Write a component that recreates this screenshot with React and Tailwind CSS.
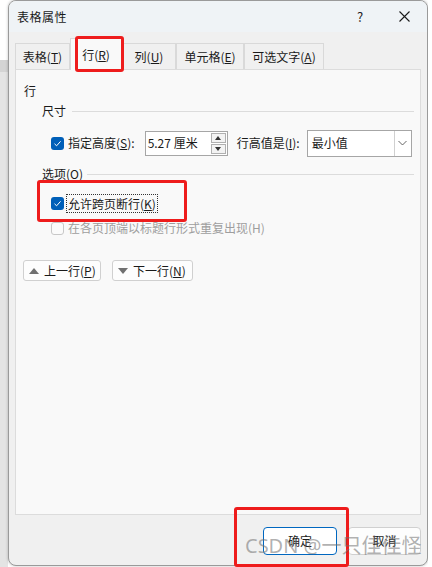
import React from "react";

const font = { fontFamily: '"Noto Sans CJK SC", "Microsoft YaHei", "Noto Sans", sans-serif' };

function Check({ checked = true, disabled = false }) {
  if (disabled) {
    return <div className="w-[13px] h-[13px] rounded-[3px] border border-[#c8c8c8] bg-[#fbfbfb] shrink-0" />;
  }
  return (
    <div className="w-[13px] h-[13px] rounded-[3px] bg-[#005fb8] flex items-center justify-center shrink-0">
      {checked && (
        <svg width="9" height="9" viewBox="0 0 9 9">
          <path d="M1.5 4.8 L3.6 6.8 L7.6 2.3" fill="none" stroke="#fff" strokeWidth="1" />
        </svg>
      )}
    </div>
  );
}

function Tab({ children, selected, w }) {
  if (selected) {
    return (
      <div className={`h-[32px] ${w} -mb-px bg-[#f9f9f9] border border-[#d9d9d9] border-b-0 flex items-center justify-center text-[12px] text-[#1a1a1a] relative z-10`}>
        {children}
      </div>
    );
  }
  return (
    <div className={`h-[26px] ${w} bg-[#f0f0f0] border border-[#d9d9d9] border-b-0 flex items-center justify-center text-[12px] text-[#1a1a1a]`}>
      {children}
    </div>
  );
}

export default function App() {
  return (
    <div className="w-[432px] h-[567px] relative bg-white overflow-hidden" style={font}>
      <div className="flex h-full">
        {/* background strip */}
        <div className="w-[8px] flex flex-col">
          <div className="h-[60px] bg-white" />
          <div className="h-[12px] bg-[#d4d4d4]" />
          <div className="flex-1 bg-[#e4e4e4]" />
        </div>
        {/* dialog */}
        <div className="w-[420px] h-[566px] border border-[#9a9a9a] rounded-[8px] overflow-hidden flex flex-col bg-[#f0f0f0] shadow-[0_0_3px_rgba(0,0,0,0.25)]">
          {/* title bar */}
          <div className="h-[31px] bg-[#eff3f6] flex items-center shrink-0">
            <div className="pl-[8px] text-[12px] text-[#1a1a1a] flex-1 tracking-[0.5px]">表格属性</div>
            <div className="w-[24px] text-center text-[13px] text-[#222] mr-[22px]">?</div>
            <div className="w-[20px] mr-[13px] flex items-center justify-center">
              <svg width="11" height="11" viewBox="0 0 11 11">
                <path d="M0.5 0.5 L10.5 10.5 M10.5 0.5 L0.5 10.5" stroke="#1a1a1a" strokeWidth="1.1" />
              </svg>
            </div>
          </div>
          {/* tabs */}
          <div className="px-[6px] flex items-end h-[37px] shrink-0">
            <Tab w="w-[55px]">表格(<u>T</u>)</Tab>
            <Tab selected w="w-[52px]">行(<u>R</u>)</Tab>
            <Tab w="w-[54px]">列(<u>U</u>)</Tab>
            <Tab w="w-[68px]">单元格(<u>E</u>)</Tab>
            <Tab w="w-[80px]">可选文字(<u>A</u>)</Tab>
          </div>
          {/* panel */}
          <div className="mx-[6px] h-[446px] bg-[#f9f9f9] border border-[#dcdcdc] shrink-0 flex flex-col text-[12px] text-[#1a1a1a]">
            <div className="mt-[13px] h-[16px] pl-[8px] flex items-center">行</div>
            <div className="mt-[4px] h-[16px] pl-[26px] pr-[6px] flex items-center gap-[6px]">
              <span>尺寸</span>
              <div className="flex-1 h-px bg-[#dcdcdc]" />
            </div>
            <div className="mt-[11px] h-[26px] pl-[35px] flex items-center">
              <Check />
              <span className="ml-[4px]">指定高度(<u>S</u>):</span>
              <div className="ml-[10px] w-[83px] h-[25px] bg-white border border-[#a6a6a6] flex items-center pl-[2px] pr-[1px]">
                <span className="flex-1">5.27 厘米</span>
                <div className="w-[15px] h-[21px] flex flex-col gap-[1px]">
                  <div className="flex-1 border border-[#b0b0b0] bg-[#f3f3f3] flex items-center justify-center">
                    <svg width="6" height="4" viewBox="0 0 6 4"><path d="M0 4 L3 0 L6 4 Z" fill="#333" /></svg>
                  </div>
                  <div className="flex-1 border border-[#b0b0b0] bg-[#f3f3f3] flex items-center justify-center">
                    <svg width="6" height="4" viewBox="0 0 6 4"><path d="M0 0 L3 4 L6 0 Z" fill="#333" /></svg>
                  </div>
                </div>
              </div>
              <span className="ml-[9px]">行高值是(<u>I</u>):</span>
              <div className="ml-[7px] w-[105px] h-[27px] bg-white border border-[#a6a6a6] flex items-center">
                <span className="flex-1 pl-[4px]">最小值</span>
                <div className="w-[17px] h-full border-l border-[#d0d0d0] flex items-center justify-center">
                  <svg width="9" height="6" viewBox="0 0 9 6"><path d="M0.5 1 L4.5 5 L8.5 1" fill="none" stroke="#555" strokeWidth="0.9" /></svg>
                </div>
              </div>
            </div>
            <div className="mt-[10px] h-[16px] pl-[26px] pr-[6px] flex items-center gap-[4px]">
              <span>选项(<u>O</u>)</span>
              <div className="flex-1 h-px bg-[#dcdcdc]" />
            </div>
            <div className="mt-[12px] h-[19px] pl-[35px] flex items-center">
              <Check />
              <span className="ml-[2px] px-[1px] border border-dotted border-[#333] leading-[17px]">允许跨页断行(<u>K</u>)</span>
            </div>
            <div className="mt-[7px] h-[16px] pl-[35px] flex items-center text-[#9e9e9e]">
              <Check disabled />
              <span className="ml-[4px]">在各页顶端以标题行形式重复出现(H)</span>
            </div>
            <div className="mt-[24px] h-[21px] pl-[7px] flex items-center gap-[11px]">
              <div className="w-[78px] h-[21px] bg-[#fdfdfd] border border-[#d0d0d0] rounded-[3px] flex items-center pl-[5px]">
                <svg width="10" height="6" viewBox="0 0 10 6"><path d="M0 6 L5 0 L10 6 Z" fill="#707070" /></svg>
                <span className="ml-[5px]">上一行(<u>P</u>)</span>
              </div>
              <div className="w-[81px] h-[21px] bg-[#fdfdfd] border border-[#d0d0d0] rounded-[3px] flex items-center pl-[5px]">
                <svg width="10" height="6" viewBox="0 0 10 6"><path d="M0 0 L5 6 L10 0 Z" fill="#707070" /></svg>
                <span className="ml-[5px]">下一行(<u>N</u>)</span>
              </div>
            </div>
          </div>
          {/* bottom buttons */}
          <div className="mt-[12px] flex justify-end gap-[11px] pr-[6px] text-[12px] text-[#1a1a1a]">
            <div className="w-[74px] h-[28px] bg-white border border-[#0067c0] rounded-[4px] flex items-center justify-center">确定</div>
            <div className="w-[73px] h-[28px] bg-[#fdfdfd] border border-[#d0d0d0] rounded-[4px] flex items-center justify-center">取消</div>
          </div>
        </div>
        <div className="flex-1 bg-white" />
      </div>

      {/* red annotation boxes */}
      <div className="absolute left-[75px] top-[36px] w-[49px] h-[36px] border-[3px] border-[#ee1c1c] rounded-[3px] z-20" />
      <div className="absolute left-[37px] top-[180px] w-[150px] h-[42px] border-[3px] border-[#ee1c1c] rounded-[3px] z-20" />
      <div className="absolute left-[234px] top-[507px] w-[115px] h-[60px] border-[3px] border-[#ee1c1c] rounded-[3px] z-20" />

      {/* watermark */}
      <div className="absolute left-[245px] top-[532px] text-[20px] leading-[28px] text-[rgba(110,110,110,0.55)] z-30 whitespace-nowrap" style={{ fontFamily: '"Noto Sans", "Noto Sans CJK SC", sans-serif' }}>
        CSDN @一只佳佳怪
      </div>
    </div>
  );
}
